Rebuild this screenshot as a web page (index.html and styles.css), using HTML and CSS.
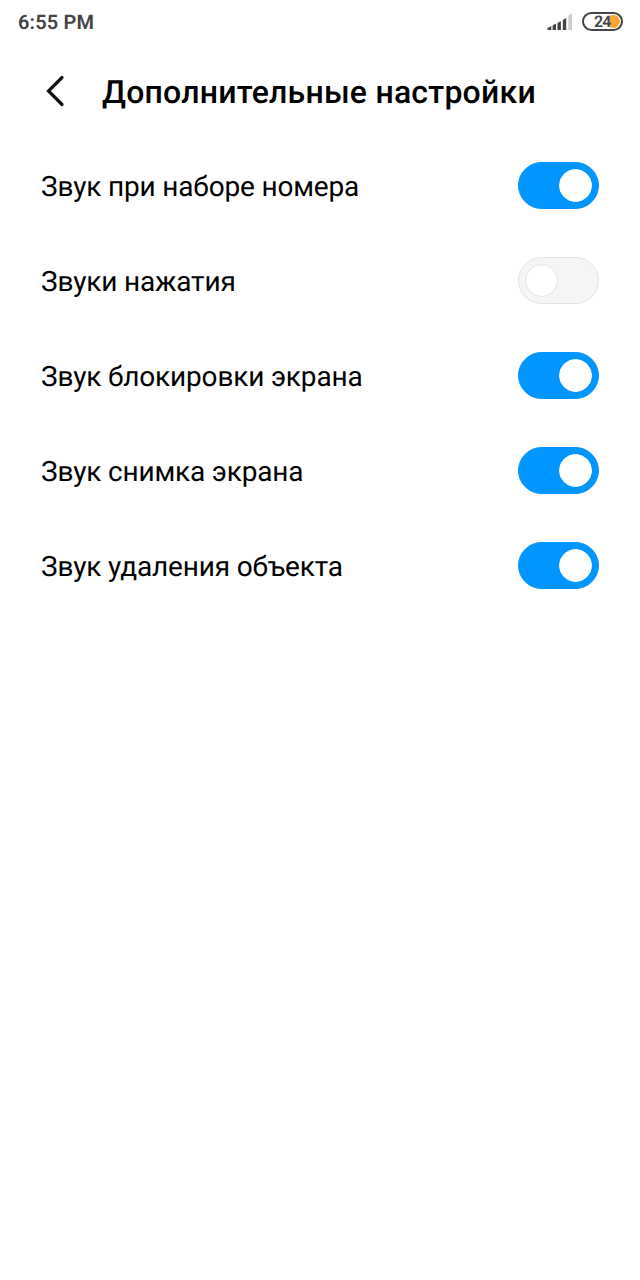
FILE: index.html
```html
<!DOCTYPE html>
<html lang="ru">
<head>
<meta charset="utf-8">
<title>Дополнительные настройки</title>
<link rel="stylesheet" href="styles.css">
</head>
<body>
<header class="status">
  <span class="time">6:55 PM</span>
  <svg class="signal" width="26" height="18" viewBox="0 0 26 18">
    <g fill="#444"><path d="M.5 17v-2l3.800-2V17zM5.600 17v-4.500l3.400-2V17zM10.500 17v-7l3.400-2v9zM15.800 17V7L19.200 5v12z"/></g>
    <path d="M21.300 17V2.500L25 .5V17z" fill="#ccc"/>
  </svg>
  <div class="battery"><span class="charge"></span><span class="level">24</span></div>
</header>
<div class="titlebar">
  <svg class="back" width="20" height="32" viewBox="0 0 20 32"><path d="M17 2.500 3.500 16 17 29.500" fill="none" stroke="#111" stroke-width="3.200" stroke-linecap="round"/></svg>
  <h1 class="title">Дополнительные настройки</h1>
</div>
<main class="list">
  <div class="row"><span class="label">Звук при наборе номера</span><span class="switch on"></span></div>
  <div class="row"><span class="label">Звуки нажатия</span><span class="switch"></span></div>
  <div class="row"><span class="label">Звук блокировки экрана</span><span class="switch on"></span></div>
  <div class="row"><span class="label">Звук снимка экрана</span><span class="switch on"></span></div>
  <div class="row"><span class="label">Звук удаления объекта</span><span class="switch on"></span></div>
</main>
</body>
</html>
```
FILE: styles.css
```css
*, *::before { box-sizing: border-box; }
body { margin: 0; height: 1280px; background: #fff; color: #000; font-family: Roboto, sans-serif; text-rendering: geometricPrecision; }
.status { display: flex; align-items: center; height: 44px; padding: 0 17px 0 18px; color: #444; }
.time { font-size: 20px; font-weight: 600; letter-spacing: 0.15px; }
.signal { margin-left: auto; margin-right: 9px; }
.battery { position: relative; display: flex; align-items: center; width: 41px; height: 19px; margin-bottom: 1px; padding-left: 10px; border: 2px solid #444; border-radius: 10px; }
.charge { position: absolute; right: 1px; top: 1px; width: 10px; height: 13px; border-radius: 2px 7px 7px 2px; background: #f9a933; }
.level { position: relative; font-size: 16px; font-weight: 600; line-height: 15px; letter-spacing: -0.8px; }
.titlebar { display: flex; align-items: center; height: 94px; padding-left: 45px; gap: 37px; }
.title { margin: 0; padding-top: 2px; font-size: 32px; font-weight: 500; letter-spacing: 0.22px; white-space: nowrap; }
.list { padding: 0 41px; }
.row { display: flex; align-items: center; justify-content: space-between; height: 95px; }
.label { padding-top: 2px; font-size: 28px; letter-spacing: -0.17px; white-space: nowrap; }
.switch { width: 81px; height: 47px; border: 1px solid #e2e2e2; border-radius: 24px; padding: 6px; display: flex; background: #f5f5f5; }
.switch::before { content: ""; width: 33px; height: 33px; border-radius: 50%; background: #fff; border: 1px solid #e2e2e2; }
.switch.on { justify-content: flex-end; background: #0095ff; border-color: #0095ff; }
.switch.on::before { border-color: #fff; }
```
